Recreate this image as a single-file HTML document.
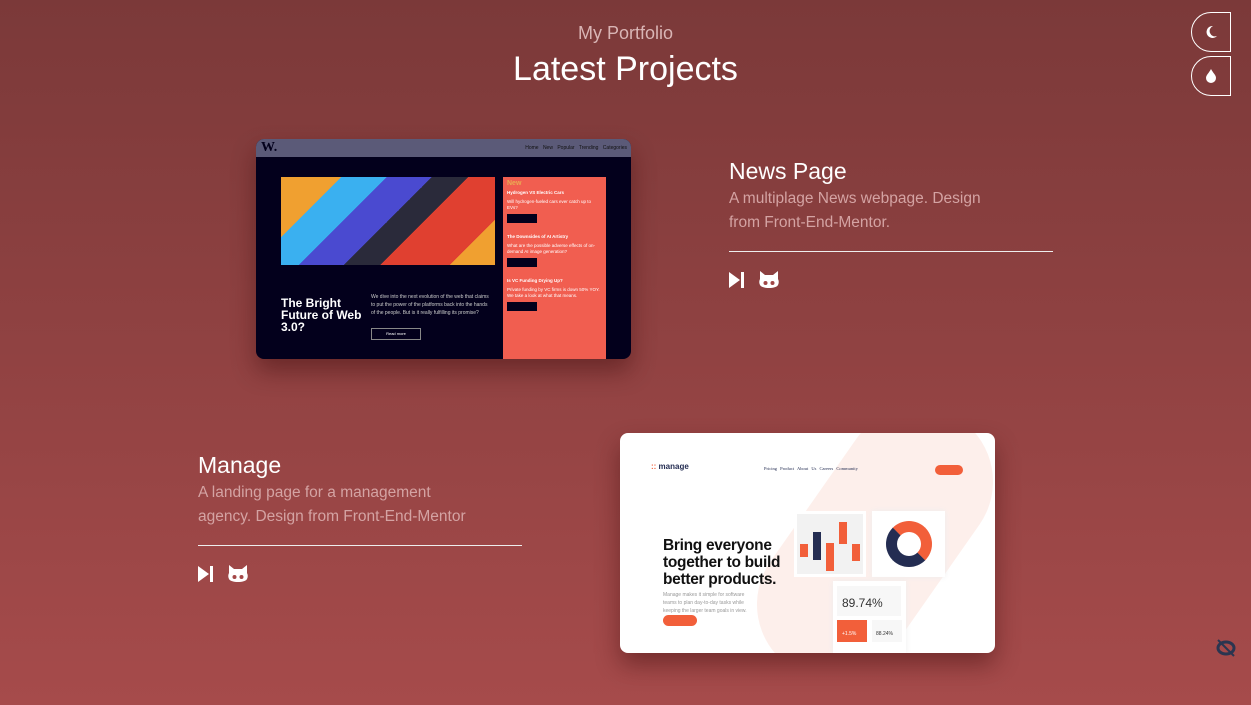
<!DOCTYPE html>
<html><head><meta charset="utf-8"><style>
*{margin:0;padding:0;box-sizing:border-box}
body{width:1251px;height:705px;overflow:hidden;font-family:"Liberation Sans",sans-serif;background:linear-gradient(#7b3939,#a64b4b);position:relative;color:#fff}
.a{position:absolute}
.sub{top:23px;width:100%;text-align:center;font-size:18px;color:#d9b5b5}
.title{top:50px;width:100%;text-align:center;font-size:34px;color:#fff}
.tb{width:40px;height:40px;border:1.5px solid #fff;border-radius:20px 0 0 20px;left:1191px;display:flex;align-items:center;justify-content:center}
.card{box-shadow:0 12px 24px rgba(60,10,10,.45);border-radius:8px;overflow:hidden}
h2{font-weight:400;font-size:23px;color:#fff}
.desc{font-size:15.5px;line-height:24px;color:#d4a3a3;margin-top:2px;width:270px}
.hr{height:1px;background:#eee;margin-top:16px}
.icons{margin-top:18px;display:flex;gap:12px;align-items:center}
</style></head><body>
<div class="a sub">My Portfolio</div>
<div class="a title">Latest Projects</div>
<div class="a tb" style="top:12px"><svg width="16" height="16" viewBox="0 0 16 16"><path d="M10 2a6 6 0 1 0 4 10A5 5 0 0 1 10 2z" fill="#fff"/></svg></div>
<div class="a tb" style="top:56px"><svg width="14" height="16" viewBox="0 0 14 16"><path d="M7 1C5 5 2 7 2 10a5 5 0 0 0 10 0C12 7 9 5 7 1z" fill="#fff"/></svg></div>

<!-- News card -->
<div class="a card" style="left:256px;top:139px;width:375px;height:220px;background:#03001c">
 <div class="a" style="left:0;top:0;width:375px;height:18px;background:#5b5a78"></div>
 <div class="a" style="left:5px;top:1px;font:bold 14px 'Liberation Serif',serif;color:#03001c">W.</div>
 <div class="a" style="right:4px;top:6px;font-size:5px;color:#111;word-spacing:3px">Home New Popular Trending Categories</div>
 <div class="a" style="left:25px;top:38px;width:214px;height:88px;background:linear-gradient(135deg,#f0a030 0 20%,#3ab0f0 20% 35%,#4a4ad0 35% 50%,#2a2a3a 50% 62%,#e04030 62% 85%,#f0a030 85%)"></div>
 <div class="a" style="left:25px;top:158px;font:bold 12px/12px 'Liberation Sans';color:#fff;width:90px">The Bright Future of Web 3.0?</div>
 <div class="a" style="left:115px;top:154px;width:118px;font-size:5px;line-height:8px;color:#ccc">We dive into the next evolution of the web that claims to put the power of the platforms back into the hands of the people. But is it really fulfilling its promise?</div>
 <div class="a" style="left:115px;top:189px;width:50px;height:12px;border:1px solid #888;font-size:4px;text-align:center;line-height:10px;color:#fff">Read more</div>
 <div class="a" style="left:247px;top:38px;width:103px;height:182px;background:#f15e50;padding:4px;font-size:4.5px;color:#fff;line-height:6px">
  <div style="color:#e9ab53;font-size:7px;font-weight:bold">New</div>
  <div style="font-weight:bold;margin-top:3px">Hydrogen VS Electric Cars</div><div style="margin-top:3px">Will hydrogen-fueled cars ever catch up to EVs?</div>
  <div style="background:#03001c;width:30px;height:9px;margin-top:3px"></div>
  <div style="font-weight:bold;margin-top:11px">The Downsides of AI Artistry</div><div style="margin-top:3px">What are the possible adverse effects of on-demand AI image generation?</div>
  <div style="background:#03001c;width:30px;height:9px;margin-top:3px"></div>
  <div style="font-weight:bold;margin-top:11px">Is VC Funding Drying Up?</div><div style="margin-top:3px">Private funding by VC firms is down 50% YOY. We take a look at what that means.</div>
  <div style="background:#03001c;width:30px;height:9px;margin-top:3px"></div>
 </div>
</div>

<div class="a" style="left:729px;top:158px;width:324px">
 <h2>News Page</h2>
 <div class="desc">A multiplage News webpage. Design from Front-End-Mentor.</div>
 <div class="hr"></div>
 <div class="icons">
  <svg width="16" height="18" viewBox="0 0 16 18"><path d="M0 1v16l11-8z M12 1h3v16h-3z" fill="#fff"/></svg>
  <svg width="24" height="20" viewBox="0 0 24 20"><path d="M3 1l5 4h8l5-4v8c1 2 1 4 0 6-2 4-16 4-18 0-1-2-1-4 0-6z" fill="#fff"/><ellipse cx="8.5" cy="13" rx="2" ry="2" fill="#a04646"/><ellipse cx="15.5" cy="13" rx="2" ry="2" fill="#a04646"/></svg>
 </div>
</div>

<div class="a" style="left:198px;top:452px;width:324px">
 <h2>Manage</h2>
 <div class="desc">A landing page for a management agency. Design from Front-End-Mentor</div>
 <div class="hr"></div>
 <div class="icons">
  <svg width="16" height="18" viewBox="0 0 16 18"><path d="M0 1v16l11-8z M12 1h3v16h-3z" fill="#fff"/></svg>
  <svg width="24" height="20" viewBox="0 0 24 20"><path d="M3 1l5 4h8l5-4v8c1 2 1 4 0 6-2 4-16 4-18 0-1-2-1-4 0-6z" fill="#fff"/><ellipse cx="8.5" cy="13" rx="2" ry="2" fill="#a44848"/><ellipse cx="15.5" cy="13" rx="2" ry="2" fill="#a44848"/></svg>
 </div>
</div>

<!-- Manage card -->
<div class="a card" style="left:620px;top:433px;width:375px;height:220px;background:#fff">
 <div class="a" style="left:180px;top:-40px;width:150px;height:300px;background:#fdefeb;border-radius:75px;transform:rotate(35deg)"></div>
 <div class="a" style="left:31px;top:29px;font:bold 8px 'Liberation Sans';color:#242d52"><span style="color:#f25f3a">::</span> manage</div>
 <div class="a" style="left:144px;top:33px;font:4.5px 'Liberation Serif';color:#242d52;word-spacing:2px">Pricing Product About Us Careers Community</div>
 <div class="a" style="left:315px;top:32px;width:28px;height:10px;border-radius:5px;background:#f25f3a"></div>
 <div class="a" style="left:174px;top:78px;width:72px;height:66px;background:#f2f2f2;border:3px solid #fff"></div>
 <div class="a" style="left:180px;top:111px;width:8px;height:13px;background:#f25f3a"></div>
 <div class="a" style="left:193px;top:99px;width:8px;height:28px;background:#242d52"></div>
 <div class="a" style="left:206px;top:110px;width:8px;height:28px;background:#f25f3a"></div>
 <div class="a" style="left:219px;top:89px;width:8px;height:22px;background:#f25f3a"></div>
 <div class="a" style="left:232px;top:111px;width:8px;height:17px;background:#f25f3a"></div>
 <div class="a" style="left:252px;top:78px;width:73px;height:66px;background:#fff;box-shadow:0 0 6px #eee"></div>
 <div class="a" style="left:266px;top:88px;width:46px;height:46px;border-radius:50%;border:11px solid #242d52;border-top-color:#f25f3a;border-right-color:#f25f3a"></div>
 <div class="a" style="left:43px;top:104px;font:bold 15.5px/17px 'Liberation Sans';color:#111;letter-spacing:-.3px">Bring everyone<br>together to build<br>better products.</div>
 <div class="a" style="left:43px;top:158px;width:95px;font-size:5px;line-height:8px;color:#999">Manage makes it simple for software teams to plan day-to-day tasks while keeping the larger team goals in view.</div>
 <div class="a" style="left:43px;top:182px;width:34px;height:11px;border-radius:6px;background:#f25f3a"></div>
 <div class="a" style="left:213px;top:148px;width:73px;height:72px;background:#fff;box-shadow:0 0 6px #eee"></div>
 <div class="a" style="left:217px;top:153px;width:64px;height:30px;background:#f7f7f7;font-size:12px;color:#333;padding:10px 5px">89.74%</div>
 <div class="a" style="left:217px;top:187px;width:30px;height:22px;background:#f25f3a;font-size:5px;color:#fff;padding:11px 5px">+1.5%</div>
 <div class="a" style="left:252px;top:187px;width:30px;height:22px;background:#f7f7f7;font-size:5px;color:#333;padding:11px 4px">88.24%</div>
</div>

<svg class="a" style="left:1215px;top:638px" width="22" height="20" viewBox="0 0 22 20"><ellipse cx="11" cy="10" rx="8" ry="6" fill="none" stroke="#2a3550" stroke-width="3"/><path d="M3 2l16 16" stroke="#2a3550" stroke-width="2"/></svg>
</body></html>
